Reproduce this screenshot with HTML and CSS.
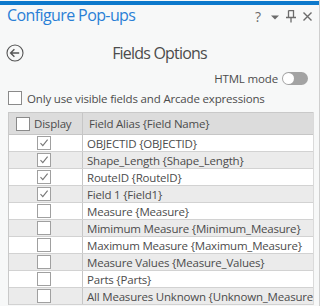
FILE: index.html
```html
<!DOCTYPE html>
<html>
<head>
<meta charset="utf-8">
<link rel="stylesheet" href="styles.css">
</head>
<body>
<div class="panel">
  <div class="accent"></div>
  <header class="titlebar">
    <h1 class="title">Configure Pop-ups</h1>
    <div class="tools">
      <span class="help">?</span>
      <svg class="tool" width="10" height="10" viewBox="0 0 10 10"><path d="M1 3.5h8L5 7.5z" fill="#6b6b6b"/></svg>
      <svg class="tool" width="12" height="13" viewBox="0 0 12 13"><path d="M3.5 0.5h5v7M3.5 0.5v7M1 7.5h10M6 7.5v5" fill="none" stroke="#6b6b6b" stroke-width="1.3"/></svg>
      <svg class="tool" width="11" height="11" viewBox="0 0 11 11"><path d="M1.5 1.5l8 8M9.5 1.5l-8 8" stroke="#6b6b6b" stroke-width="1.4"/></svg>
    </div>
  </header>
  <div class="nav">
    <svg class="back" width="18" height="18" viewBox="0 0 18 18"><circle cx="9" cy="9" r="8" fill="none" stroke="#555" stroke-width="1.1"/><path d="M4.6 9h8.6M8.4 5.2L4.6 9l3.8 3.8" fill="none" stroke="#555" stroke-width="1.4"/></svg>
    <h2 class="subtitle">Fields Options</h2>
  </div>
  <div class="htmlmode"><span>HTML mode</span><span class="toggle"><span class="knob"></span></span></div>
  <div class="opt"><span class="cb"></span><span>Only use visible fields and Arcade expressions</span></div>
  <div class="table">
    <div class="row head">
      <div class="c1"><span class="cb"></span><span>Display</span></div>
      <div class="c2">Field Alias {Field Name}</div>
    </div>
    <div class="row"><div class="c1"><span class="cb sm on"><svg width="12" height="12" viewBox="0 0 12 12"><path d="M2.5 6.2l2.3 2.5 4.8-6" fill="none" stroke="#777" stroke-width="1.1"/></svg></span></div><div class="c2">OBJECTID {OBJECTID}</div></div>
    <div class="row alt"><div class="c1"><span class="cb sm on"><svg width="12" height="12" viewBox="0 0 12 12"><path d="M2.5 6.2l2.3 2.5 4.8-6" fill="none" stroke="#777" stroke-width="1.1"/></svg></span></div><div class="c2">Shape_Length {Shape_Length}</div></div>
    <div class="row"><div class="c1"><span class="cb sm on"><svg width="12" height="12" viewBox="0 0 12 12"><path d="M2.5 6.2l2.3 2.5 4.8-6" fill="none" stroke="#777" stroke-width="1.1"/></svg></span></div><div class="c2">RouteID {RouteID}</div></div>
    <div class="row alt"><div class="c1"><span class="cb sm on"><svg width="12" height="12" viewBox="0 0 12 12"><path d="M2.5 6.2l2.3 2.5 4.8-6" fill="none" stroke="#777" stroke-width="1.1"/></svg></span></div><div class="c2">Field 1 {Field1}</div></div>
    <div class="row"><div class="c1"><span class="cb sm"></span></div><div class="c2">Measure {Measure}</div></div>
    <div class="row alt"><div class="c1"><span class="cb sm"></span></div><div class="c2">Mimimum Measure {Minimum_Measure}</div></div>
    <div class="row"><div class="c1"><span class="cb sm"></span></div><div class="c2">Maximum Measure {Maximum_Measure}</div></div>
    <div class="row alt"><div class="c1"><span class="cb sm"></span></div><div class="c2">Measure Values {Measure_Values}</div></div>
    <div class="row"><div class="c1"><span class="cb sm"></span></div><div class="c2">Parts {Parts}</div></div>
    <div class="row alt"><div class="c1"><span class="cb sm"></span></div><div class="c2">All Measures Unknown {Unknown_Measures}</div></div>
  </div>
</div>
</body>
</html>
```

FILE: styles.css
```css
* { box-sizing: border-box; }
html, body { margin: 0; padding: 0; }
body {
  width: 320px;
  height: 306px;
  overflow: hidden;
  background: #f7f8f8;
  font-family: "Open Sans", "Noto Sans", sans-serif;
  color: #4c4c4c;
}
.panel {
  width: 320px;
  height: 306px;
  border-right: 1px solid #cfcfcf;
  padding-top: 1px;
  background: #f7f8f8;
  display: flex;
  flex-direction: column;
}
.accent { height: 4px; background: #0d79cc; }
.titlebar {
  height: 20px;
  display: flex;
  align-items: center;
  justify-content: space-between;
  padding-left: 7px;
  padding-right: 6px;
}
.title {
  margin: 0;
  font-size: 16px;
  font-weight: 400;
  line-height: 20px;
  letter-spacing: -0.6px;
  color: #2a7fd6;
}
.tools { display: flex; align-items: center; gap: 5px; margin-top: 3px; }
.help { font-size: 14px; color: #6b6b6b; line-height: 14px; margin-right: 4px; }
.tool { display: block; }
.nav {
  margin-top: 19px;
  height: 18px;
  display: grid;
  grid-template-columns: 1fr auto 1fr;
  align-items: center;
}
.back { grid-column: 1; justify-self: start; margin-left: 6px; display: block; }
.subtitle {
  grid-column: 2;
  margin: 0;
  font-size: 16px;
  font-weight: 400;
  line-height: 18px;
  letter-spacing: -0.8px;
  color: #4c4c4c;
}
.htmlmode {
  margin-top: 8px;
  height: 17px;
  display: flex;
  align-items: center;
  justify-content: flex-end;
  gap: 4px;
  padding-right: 11px;
  font-size: 11.5px;
  letter-spacing: -0.15px;
}
.toggle {
  width: 26px;
  height: 13px;
  border-radius: 7px;
  background: #a3a3a3;
  padding: 1px;
  display: flex;
}
.knob { width: 11px; height: 11px; border-radius: 50%; background: #fff; }
.opt {
  margin-top: 3px;
  height: 16px;
  display: flex;
  align-items: center;
  gap: 5px;
  padding-left: 8px;
  font-size: 11.5px;
  letter-spacing: -0.17px;
}
.cb {
  width: 14px;
  height: 14px;
  border: 1px solid #8a8a8a;
  background: #fff;
  flex: none;
  display: flex;
  align-items: center;
  justify-content: center;
}
.cb.sm { border-color: #a0a0a0; }
.cb svg { display: block; }
.table {
  margin-top: 6px;
  margin-left: 8px;
  width: 306px;
  border-left: 1px solid #c9c9c9;
  border-right: 1px solid #dadada;
  overflow: hidden;
  font-size: 11.5px;
  letter-spacing: -0.2px;
}
.row {
  display: flex;
  height: 17px;
  border-bottom: 1px solid #d2d2d2;
  background: #fff;
  white-space: nowrap;
}
.row.alt { background: #ebebeb; }
.row.head {
  height: 23px;
  border-top: 1px solid #c9c9c9;
  border-bottom: 1px solid #c6c6c6;
  background: #dcdcdc;
}
.c1 {
  width: 74px;
  flex: none;
  display: flex;
  align-items: center;
  padding-left: 28px;
  border-right: 1px solid #c6c6c6;
}
.head .c1 { padding-left: 7px; gap: 4px; }
.c2 {
  flex: 1;
  display: flex;
  align-items: center;
  padding-left: 4px;
  overflow: hidden;
}
.head .c2 { padding-left: 6px; }
```
